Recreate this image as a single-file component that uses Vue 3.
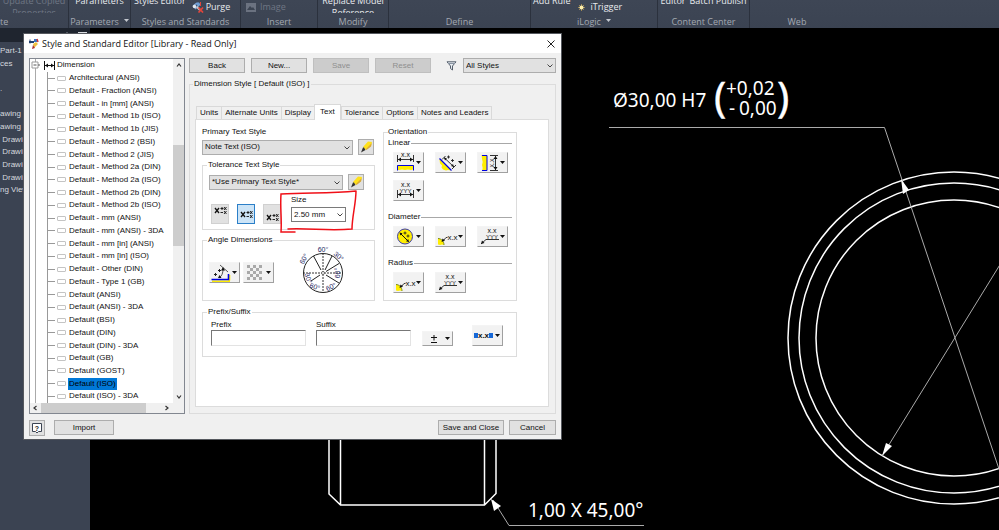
<script setup>
import { ref } from 'vue'

const treeItems = [
  'Architectural (ANSI)', 'Default - Fraction (ANSI)', 'Default - in [mm] (ANSI)',
  'Default - Method 1b (ISO)', 'Default - Method 1b (JIS)', 'Default - Method 2 (BSI)',
  'Default - Method 2 (JIS)', 'Default - Method 2a (DIN)', 'Default - Method 2a (ISO)',
  'Default - Method 2b (DIN)', 'Default - Method 2b (ISO)', 'Default - mm (ANSI)',
  'Default - mm (ANSI) - 3DA', 'Default - mm [in] (ANSI)', 'Default - mm [in] (ISO)',
  'Default - Other (DIN)', 'Default - Type 1 (GB)', 'Default (ANSI)', 'Default (ANSI) - 3DA',
  'Default (BSI)', 'Default (DIN)', 'Default (DIN) - 3DA', 'Default (GB)', 'Default (GOST)',
  'Default (ISO)', 'Default (ISO) - 3DA'
]
const selected = ref('Default (ISO)')

const tabs = ['Units', 'Alternate Units', 'Display', 'Text', 'Tolerance', 'Options', 'Notes and Leaders']
const activeTab = ref('Text')

const orientation = [
  { name: 'Linear', icons: ['horizontal', 'aligned', 'vertical', 'stacked'] },
  { name: 'Diameter', icons: ['circle', 'leader', 'shelf'] },
  { name: 'Radius', icons: ['leader', 'shelf'] }
]

const browserRows = ['Part-1', 'ces', '', '.', '', 'awing View', 'awing View', ' Drawing', ' Drawing', ' Drawing', ' Drawing', 'ng View']

const toleranceAlign = ref('middle')
const alignments = ['top', 'middle', 'bottom']
</script>

<template>
  <div class="app">
    <svg class="defs" aria-hidden="true">
      <defs>
        <symbol id="i-horizontal" viewBox="0 0 22 19">
          <path d="M3 12h17v5l-1-.6-2 .6-3-.5-3 .5-3-.5-3 .5H3z" fill="#ffee00" />
          <path d="M3.500 17.500v-5h16v5" fill="none" stroke="#0000e0" />
          <path d="M3.500 2v7M19.500 2v7M4 6.500h15" stroke="#333" fill="none" />
          <path d="M4 6.500l3-2v4zM19 6.500l-3-2v4z" fill="#111" />
          <text x="11.500" y="4" class="g">x.x</text>
        </symbol>
        <symbol id="i-aligned" viewBox="0 0 22 19">
          <path d="M3.500 6L15 17.500l-3-.5-2 .5-3-1-1.500-2 .5-2-2-2z" fill="#ffee00" />
          <path d="M3.500 5.500L15.500 17.500" stroke="#0000e0" stroke-width="1.300" />
          <path d="M6 6.500L9.500 3M16 16l4-4M8 4.500L18 14" stroke="#333" fill="none" />
          <path d="M8 4.500l3 1-2 2zM18 14l-3-1 2-2z" fill="#111" />
          <path d="M12.500 2.500v3M11 4h3M16.500 6v3M15 7.500h3" stroke="#222" stroke-width=".9" />
        </symbol>
        <symbol id="i-vertical" viewBox="0 0 22 19">
          <path d="M3.500 2H9v16H4l.7-3-.7-3 .7-3-.7-3z" fill="#ffee00" />
          <path d="M4 2.500h5v15H4" fill="none" stroke="#0000e0" />
          <path d="M12 2.500h8M12 17.500h8M17.500 3v14" stroke="#333" fill="none" />
          <path d="M17.500 3l-2 3h4zM17.500 17l-2-3h4z" fill="#111" />
          <text x="0" y="0" class="g" transform="translate(15.500 10) rotate(-90)">x.x</text>
        </symbol>
        <symbol id="i-stacked" viewBox="0 0 22 19">
          <path d="M3.500 9v8M19.500 9v8M4 13.500h15" stroke="#333" fill="none" />
          <path d="M4 13.500l3-2v4zM19 13.500l-3-2v4z" fill="#111" />
          <text x="11.500" y="6" class="g">x.x</text>
          <text x="11.500" y="12" class="g s">YYY</text>
        </symbol>
        <symbol id="i-circle" viewBox="0 0 22 19">
          <circle cx="11" cy="9.500" r="7.500" fill="#ffee00" stroke="#3a3aa8" />
          <path d="M6 6l8.500 8.500" stroke="#111" />
          <path d="M5.500 5.500l3 .8-2.200 2.200zM15 15l-3-.8 2.200-2.200z" fill="#111" />
          <path d="M11 4.500v3M9.500 6h3M14 7.500v3M12.500 9h3" stroke="#222" stroke-width=".9" />
        </symbol>
        <symbol id="i-leader" viewBox="0 0 22 19">
          <path d="M2 11.500c3 0 6 2.500 6 6.500l-2-.5-2 .5-2-.5z" fill="#ffee00" />
          <path d="M2 11.500c3 0 6 2.500 6 6.500" fill="none" stroke="#7a8a20" />
          <path d="M7 14l3-3.500h1.500" stroke="#333" fill="none" />
          <path d="M5.500 15l1-3.500 2.500 2z" fill="#111" />
          <text x="16.500" y="12.500" class="g l">x.x</text>
        </symbol>
        <symbol id="i-shelf" viewBox="0 0 22 19">
          <path d="M3 17l5-4.500h13" stroke="#333" fill="none" />
          <path d="M3 17l1-3.500 2.500 2.500z" fill="#111" />
          <text x="14" y="5.500" class="g">x.x</text>
          <text x="14" y="11.500" class="g s">YYY</text>
        </symbol>
        <symbol id="i-angle" viewBox="0 0 22 19">
          <path d="M2 17.500h16.500V12h1.800v5.500H20V19H2z" fill="#ffee00" />
          <path d="M1.500 16.500h17V11" stroke="#0000e0" stroke-width="1.600" fill="none" />
          <path d="M9 15c3-2 4-5 4-9M10 2l8 7" stroke="#555" fill="none" />
          <path d="M13 4l2 3.500h-4zM8 15l3.500 0-2-3z" fill="#111" />
          <path d="M4 11.500h3M5.500 10v3M8 7.500h3M9.500 6v3" stroke="#222" />
        </symbol>
        <symbol id="i-checker" viewBox="0 0 22 19">
          <path fill="#a9a9a9" d="M3 2h3v3H3zM9 2h3v3H9zM15 2h3v3h-3zM6 5h3v3H6zM12 5h3v3h-3zM3 8h3v3H3zM9 8h3v3H9zM15 8h3v3h-3zM6 11h3v3H6zM12 11h3v3h-3zM3 14h3v3H3zM9 14h3v3H9zM15 14h3v3h-3z" />
        </symbol>
        <symbol id="i-spread" viewBox="0 0 22 19">
          <path d="M1 7h4v5H1zM16 7h4v5h-4z" fill="#1668d8" />
          <text x="10.500" y="12" class="g b">x.x</text>
        </symbol>
        <symbol id="i-plusminus" viewBox="0 0 22 13">
          <path d="M8 5.500h6M11 3v5.500M8 10.500h6" stroke="#111" fill="none" />
        </symbol>
        <symbol id="i-pencil" viewBox="0 0 14 14">
          <path d="M4 7l5-5.500 4 .5-1 4L7 10z" fill="#ffe11a" />
          <path d="M12.800 3l-.8 3.500L7.500 10l-.5-1z" fill="#d9a93c" />
          <path d="M4 7.500l1 0 1.500 2.500L2 12.500z" fill="#333" />
        </symbol>
        <symbol id="i-chevron" viewBox="0 0 8 6">
          <path d="M1.500 1.500L4 4l2.500-2.500" stroke="#444" fill="none" />
        </symbol>
        <symbol id="i-caret" viewBox="0 0 5 3">
          <path d="M0 0h5L2.500 3z" fill="currentColor" />
        </symbol>
      </defs>
    </svg>

    <header class="ribbon">
      <section class="group g1">
        <div class="tools"><button class="big dim">Update Copied<br>Properties</button></div>
        <h2>te</h2>
      </section>
      <section class="group g2">
        <div class="tools"><button class="big">Parameters</button></div>
        <h2>Parameters <svg width="5" height="3" class="down"><use href="#i-caret" /></svg></h2>
      </section>
      <section class="group g3">
        <div class="tools">
          <button class="big">Styles Editor</button>
          <button class="small">
            <svg width="12" height="12" viewBox="0 0 12 12">
              <path d="M1 5l4-3M3 8l5-5" stroke="#7fa8d8" stroke-width="1.500" />
              <circle cx="2.500" cy="5.500" r="1.800" fill="#dfe6ee" /><circle cx="6" cy="3" r="1.800" fill="#6f9fd8" />
              <path d="M5 6l3 3" stroke="#ccc" stroke-width="2" />
              <path d="M6.500 6.500l4.500 5M11 6.500l-4.500 5" stroke="#e2453b" stroke-width="1.700" />
              <path d="M8.500 1v4" stroke="#e2453b" />
            </svg>
            Purge
          </button>
        </div>
        <h2>Styles and Standards</h2>
      </section>
      <section class="group g4">
        <div class="tools">
          <button class="small dim">
            <svg width="10" height="9" viewBox="0 0 10 9">
              <path d="M0 0h10v9H0z" fill="#6b7280" /><path d="M1 7l3-4 2 2 1-1 2 3z" fill="#3c4452" />
            </svg>
            Image
          </button>
        </div>
        <h2>Insert</h2>
      </section>
      <section class="group g5">
        <div class="tools"><button class="big">Replace Model<br>Reference</button></div>
        <h2>Modify</h2>
      </section>
      <section class="group g6">
        <div class="tools"></div>
        <h2>Define</h2>
      </section>
      <section class="group g7">
        <div class="tools">
          <button class="big">Add Rule</button>
          <button class="small">
            <svg width="9" height="9" viewBox="0 0 9 9">
              <path d="M4.500 1v7M1 4.500h7M2 2l5 5M7 2L2 7" stroke="#b59a55" stroke-width=".8" />
              <circle cx="4.500" cy="4.500" r="2" fill="#ffeeaa" />
            </svg>
            iTrigger
          </button>
        </div>
        <h2>iLogic <svg width="5" height="3" class="down"><use href="#i-caret" /></svg></h2>
      </section>
      <section class="group g8">
        <div class="tools"><button class="big">Editor</button><button class="big">Batch Publish</button></div>
        <h2>Content Center</h2>
      </section>
      <section class="group g9">
        <div class="tools"></div>
        <h2>Web</h2>
      </section>
    </header>

    <main class="workspace">
      <aside class="browser">
        <div class="browser-bar">
          <svg width="9" height="9" viewBox="0 0 9 9"><circle cx="4" cy="4" r="3" fill="none" stroke="#b8bcc4" /></svg>
          <svg width="9" height="9" viewBox="0 0 9 9"><path d="M0 .5h9M0 4.500h9" stroke="#d8dbe0" stroke-width="1" /></svg>
        </div>
        <ul><li v-for="(row, i) in browserRows" :key="i">{{ row }}</li></ul>
      </aside>

      <svg class="drawing" role="img" aria-label="Part drawing">
        <g fill="none" stroke="#fff" stroke-width="1.500">
          <circle cx="864" cy="310" r="166" />
          <circle cx="864" cy="310" r="155" />
          <circle cx="864" cy="310" r="138" />
          <path d="M239 400V466L250.500 477H394.500L406 465.500V400M250.500 400V477M394.500 400V477" />
        </g>
        <g fill="none" stroke="#aaa">
          <path d="M519 99.500H794.500L909 441" />
          <path d="M792 428L911 235" />
          <path d="M403 472L419 497.500H554" />
        </g>
        <g fill="#fff">
          <path d="M811 151L813 166L819 162z" />
          <path d="M792 428L796 415L802 418z" />
          <path d="M401 471L404 483L411 478z" />
        </g>
        <g class="note">
          <text x="523" y="79">Ø30,00 H7</text>
          <text x="636" y="67">+0,02</text>
          <text x="639" y="87">-</text>
          <text x="649" y="87">0,00</text>
          <text x="624" y="84" class="paren">(</text>
          <text x="687" y="84" class="paren">)</text>
          <text x="438" y="489">1,00 X 45,00°</text>
        </g>
      </svg>
    </main>

    <div class="dialog" role="dialog" aria-labelledby="dlg-title">
      <div class="titlebar">
        <svg width="11" height="11" viewBox="0 0 11 11">
          <path d="M1 3h5v2H1z" fill="#22406e" /><path d="M2 1.500v4" stroke="#22406e" />
          <path d="M6 1h3v3H6z" fill="#3c78c8" /><path d="M9 1l1 3" stroke="#c33" stroke-width="1.500" />
          <path d="M5 6l3-2 2 2-4 4z" fill="#f0c040" /><path d="M5 7l2 3-3 1z" fill="#b03030" />
        </svg>
        <h1 id="dlg-title">Style and Standard Editor [Library - Read Only]</h1>
        <button class="close" aria-label="Close">
          <svg width="8" height="8" viewBox="0 0 8 8"><path d="M.5.5l7 7M7.500.5l-7 7" stroke="#222" /></svg>
        </button>
      </div>

      <div class="body">
        <div class="tree">
          <div class="tree-main">
            <ul role="tree">
              <li class="root">
                <svg width="9" height="9" viewBox="0 0 9 9" class="toggle"><path d="M1 1h6v6H1z" fill="#fff" stroke="#999" /><path d="M2.500 4h3M7 4h2" stroke="#555" /></svg>
                <svg width="11" height="9" viewBox="0 0 11 9"><path d="M.5 0v9M10.500 0v9M1 4.500h9" stroke="#111" /><path d="M1 4.500l3-2v4zM10 4.500l-3-2v4z" fill="#111" /></svg>
                <span>Dimension</span>
              </li>
              <li v-for="item in treeItems" :key="item" class="leaf" role="treeitem" :aria-selected="item === selected" @click="selected = item">
                <i class="branch"></i><i class="tag"></i>
                <span :class="{ on: item === selected }">{{ item }}</span>
              </li>
            </ul>
            <div class="vbar">
              <svg width="8" height="6" viewBox="0 0 8 6"><path d="M2 4.500L4 2l2 2.500" stroke="#333" stroke-width="1.200" fill="none" /></svg>
              <div class="vtrack"><div class="vthumb"></div></div>
              <svg width="8" height="6" viewBox="0 0 8 6"><path d="M2 1.500L4 4l2-2.500" stroke="#333" stroke-width="1.200" fill="none" /></svg>
            </div>
          </div>
          <div class="hbar">
            <svg width="6" height="8" viewBox="0 0 6 8"><path d="M4.500 2L2 4l2.500 2" stroke="#333" stroke-width="1.200" fill="none" /></svg>
            <div class="htrack"><div class="hthumb"></div></div>
            <svg width="6" height="8" viewBox="0 0 6 8"><path d="M1.500 2L4 4 1.500 6" stroke="#333" stroke-width="1.200" fill="none" /></svg>
          </div>
        </div>

        <div class="editor">
          <div class="toolbar">
            <button class="btn">Back</button>
            <button class="btn">New...</button>
            <button class="btn" disabled>Save</button>
            <button class="btn" disabled>Reset</button>
            <svg class="filter" width="11" height="10" viewBox="0 0 11 10"><path d="M1 .8h9L6.500 5v4L4.500 7.500V5z" fill="#e8edf2" stroke="#555f6c" /><path d="M2 2.500h7" stroke="#8a95a3" /></svg>
            <div class="pick all">
              <select aria-label="Style filter"><option>All Styles</option></select>
              <svg width="8" height="6"><use href="#i-chevron" /></svg>
            </div>
          </div>

          <fieldset class="style-group">
            <legend>Dimension Style [ Default (ISO) ]</legend>
            <div class="tabs" role="tablist">
              <button v-for="t in tabs" :key="t" role="tab" :aria-selected="t === activeTab" :class="{ active: t === activeTab }" @click="activeTab = t">{{ t }}</button>
            </div>
            <div class="pane">
              <div class="columns">
                <div class="left">
                  <label for="primary">Primary Text Style</label>
                  <div class="line">
                    <div class="pick primary">
                      <select id="primary"><option>Note Text (ISO)</option></select>
                      <svg width="8" height="6"><use href="#i-chevron" /></svg>
                    </div>
                    <button class="edit" aria-label="Edit text style"><svg width="14" height="14"><use href="#i-pencil" /></svg></button>
                  </div>

                  <fieldset class="tolerance">
                    <legend>Tolerance Text Style</legend>
                    <div class="line">
                      <div class="pick use">
                        <select aria-label="Tolerance text style"><option>*Use Primary Text Style*</option></select>
                        <svg width="8" height="6"><use href="#i-chevron" /></svg>
                      </div>
                      <button class="edit" aria-label="Edit tolerance style"><svg width="14" height="14"><use href="#i-pencil" /></svg></button>
                    </div>
                    <div class="size-row">
                      <div class="toggles">
                        <button v-for="a in alignments" :key="a" :class="[a, { active: a === toleranceAlign }]" :aria-label="'Align ' + a" @click="toleranceAlign = a">
                          <svg width="13" height="9" viewBox="0 0 13 9">
                            <path d="M1 2l4 5M5 2L1 7" stroke="#111" stroke-width="1.300" />
                            <path d="M6.500 2.500h3M8 1v3M6.500 6.500h2.500M10 1l2.500 3M12.500 1L10 4M10 5l2.500 3M12.500 5L10 8" stroke="#111" stroke-width=".9" />
                          </svg>
                        </button>
                      </div>
                      <div class="size">
                        <label for="size">Size</label>
                        <div class="pick white">
                          <select id="size"><option>2.50 mm</option></select>
                          <svg width="8" height="6"><use href="#i-chevron" /></svg>
                        </div>
                      </div>
                    </div>
                    <svg class="scribble" width="80" height="46" viewBox="0 0 80 46">
                      <path d="M77 2C50 5 25 3 2 5C1 20 3 30 2 43L16 43M77 2C77 14 73 28 73 40C50 42 30 39 9 40" />
                    </svg>
                  </fieldset>

                  <fieldset class="angle">
                    <legend>Angle Dimensions</legend>
                    <div class="angle-row">
                      <button class="drop" aria-label="Angle style"><svg width="22" height="19"><use href="#i-angle" /></svg><svg width="5" height="3"><use href="#i-caret" /></svg></button>
                      <button class="drop" aria-label="Quadrant pattern"><svg width="22" height="19"><use href="#i-checker" /></svg><svg width="5" height="3"><use href="#i-caret" /></svg></button>
                      <svg class="dial" width="48" height="50" viewBox="0 0 48 50">
                        <circle cx="24" cy="26" r="19.500" fill="none" stroke="#222" />
                        <path d="M24 6v40M4 26h40" stroke="#333" stroke-dasharray="2 1" />
                        <path d="M22 23L14.500 9M26 23l7-14M27 24.500l13-8M27 28l13 8M21 28l-9 6" stroke="#222" />
                        <circle cx="24" cy="26" r="1.500" fill="#fff" stroke="#333" stroke-width=".6" />
                        <g>
                          <text x="24" y="5">60°</text>
                          <text transform="translate(38 11) rotate(42)">30°</text>
                          <text transform="translate(7 13) rotate(-62)">60°</text>
                          <text transform="translate(41 26) rotate(-90)">60°</text>
                          <text transform="translate(7 32) rotate(70)">30°</text>
                          <text transform="translate(15 42) rotate(20)">60°</text>
                          <text transform="translate(33 42) rotate(-25)">60°</text>
                        </g>
                      </svg>
                    </div>
                  </fieldset>
                </div>

                <fieldset class="orientation">
                  <legend>Orientation</legend>
                  <section v-for="group in orientation" :key="group.name">
                    <h3>{{ group.name }}</h3>
                    <div class="drops">
                      <button v-for="icon in group.icons" :key="icon" class="drop" :aria-label="group.name + ' ' + icon">
                        <svg width="22" height="19"><use :href="'#i-' + icon" /></svg><svg width="5" height="3"><use href="#i-caret" /></svg>
                      </button>
                    </div>
                  </section>
                </fieldset>
              </div>

              <fieldset class="affix">
                <legend>Prefix/Suffix</legend>
                <div class="affix-row">
                  <div class="field"><label for="prefix">Prefix</label><input id="prefix" type="text"></div>
                  <div class="field"><label for="suffix">Suffix</label><input id="suffix" type="text"></div>
                  <button class="drop flat" aria-label="Insert symbol"><svg width="22" height="13"><use href="#i-plusminus" /></svg><svg width="5" height="3"><use href="#i-caret" /></svg></button>
                  <button class="drop spread" aria-label="Affix placement"><svg width="22" height="19"><use href="#i-spread" /></svg><svg width="5" height="3"><use href="#i-caret" /></svg></button>
                </div>
              </fieldset>
            </div>
          </fieldset>
        </div>
      </div>

      <footer>
        <button class="help" aria-label="Help">
          <svg width="12" height="12" viewBox="0 0 12 12"><path d="M1.500 1.500h9v8h-3L6 11 4.500 9.500h-3z" fill="#fff" stroke="#3c4452" /><text x="6" y="8.500">?</text></svg>
        </button>
        <button class="btn import">Import</button>
        <button class="btn save">Save and Close</button>
        <button class="btn cancel">Cancel</button>
      </footer>
    </div>
  </div>
</template>

<style>
body { margin: 0; background: #000; }
</style>

<style scoped>
* { box-sizing: border-box; }
.app {
  position: relative;
  min-height: 100vh;
  display: flex;
  flex-direction: column;
  overflow: hidden;
  background: #000;
  font: 8px/10px "Liberation Sans", Arial, sans-serif;
  color: #111;
}
.defs { position: absolute; width: 0; height: 0; }
button, select, input { font: inherit; color: inherit; margin: 0; padding: 0; border: 0; border-radius: 0; background: none; }
h1, h2, h3, ul { margin: 0; padding: 0; font: inherit; list-style: none; }
svg { display: block; flex: none; }

/* ribbon */
.ribbon {
  display: flex;
  height: 28px;
  background: linear-gradient(#3e4655, #3b4352);
  font: 9px/12px "Open Sans", "Noto Sans", sans-serif;
  color: #e8eaee;
}
.group { flex: none; border-right: 1px solid #2b313d; display: flex; flex-direction: column; }
.group h2 { color: #a3a8b1; height: 12px; display: flex; justify-content: center; align-items: center; gap: 5px; white-space: nowrap; }
.tools { height: 14px; margin-bottom: 3px; overflow: hidden; display: flex; align-items: flex-start; justify-content: center; gap: 4px; white-space: nowrap; }
.big { margin-top: -5px; flex: none; }
.small { margin-top: 1px; flex: none; display: flex; align-items: center; gap: 2px; }
.dim { color: #6f7684; }
.down { color: #c5c9d0; margin-bottom: 4px; }
.g1 { width: 69px; }
.g1 h2 { justify-content: flex-start; }
.g2 { width: 62px; }
.g3 { width: 110px; }
.g3 .tools { justify-content: flex-start; padding-left: 3px; gap: 6px; }
.g4 { width: 77px; }
.g4 .tools { justify-content: flex-start; padding-left: 5px; }
.g4 .small { gap: 4px; }
.g5 { width: 71px; }
.g6 { width: 142px; }
.g7 { width: 127px; }
.g7 .tools { justify-content: flex-start; padding-left: 2px; gap: 7px; }
.g7 .small { gap: 4px; }
.g8 { width: 92px; }
.g9 { width: 94px; border-right: 0; }

/* workspace */
.workspace { flex: 1; display: flex; min-height: 502px; }
.browser { width: 90px; background: #3b4352; color: #d5d8de; }
.browser-bar { height: 14px; background: #1f252f; display: flex; justify-content: flex-end; gap: 6px; padding: 4px 3px 0 0; }
.browser ul { margin-top: 3px; display: grid; grid-auto-rows: 1fr; height: 152px; }
.browser li { min-height: 0; line-height: 12px; white-space: pre; }
.drawing { flex: 1; width: 0; height: auto; }
.note { fill: #fff; font: 19px "Noto Sans", "Open Sans", sans-serif; }
.paren { font-size: 41px; stroke: #fff; stroke-width: 0.4; }

/* dialog */
.dialog {
  position: absolute;
  left: 24px;
  top: 34px;
  width: 537px;
  background: #f0f0f0;
  box-shadow: 0 0 0 1px #55585e;
}
.titlebar { height: 19px; background: #fff; display: flex; align-items: center; gap: 3px; padding: 0 5px 0 4px; }
.titlebar h1 { flex: 1; font: 9px/18px "Open Sans", "Noto Sans", sans-serif; color: #111; }
.close { padding: 1px; }
.body { display: grid; grid-template-columns: 156px 1fr; gap: 4px; padding: 5px 5px 0; }

.tree { background: #fff; border: 1px solid #828790; display: flex; flex-direction: column; }
.tree-main { flex: 1; display: flex; min-height: 0; }
.tree ul { flex: 1; display: flex; flex-direction: column; margin-left: 5px; border-left: 1px solid #aaa; }
.tree li { flex: 1; display: flex; align-items: center; white-space: nowrap; cursor: default; }
.root svg + svg { margin: 0 2px 0 4px; }
.toggle { margin-left: -5px; }
.leaf { margin-left: 11px; border-left: 1px solid #999; }
.branch { width: 7px; height: 1px; background: #999; }
.tag { width: 9px; height: 5px; margin: 0 2px; border: 1px solid #c4c4c4; border-radius: 1px; }
.leaf span { padding: 0 1px; line-height: 12px; }
.leaf .on { background: #0078d7; color: #000; }
.vbar { width: 11px; background: #f0f0f0; display: flex; flex-direction: column; align-items: center; padding: 3px 0; gap: 2px; }
.vtrack { flex: 1; width: 100%; display: grid; grid-template-rows: 75fr 101fr 146fr; }
.vthumb { grid-row: 2; background: #cdcdcd; }
.hbar { height: 10px; background: #f0f0f0; display: flex; align-items: center; padding: 0 14px 0 2px; gap: 3px; }
.htrack { flex: 1; height: 100%; display: grid; grid-template-columns: 106fr 15fr; }
.hthumb { background: #cdcdcd; }

.editor { display: flex; flex-direction: column; min-width: 0; }
.toolbar { display: flex; align-items: center; gap: 6px; margin-bottom: 6px; }
.btn { height: 15px; background: #e1e1e1; border: 1px solid #adadad; white-space: nowrap; }
.toolbar .btn { width: 56px; }
.btn:disabled { background: #ccc; border-color: #bfbfbf; color: #8f8f8f; }
.filter { margin-left: 9px; }

.pick { position: relative; display: flex; }
.pick select { appearance: none; flex: 1; min-width: 0; height: 15px; padding: 0 12px 0 2px; background: #e1e1e1; border: 1px solid #adadad; }
.pick svg { position: absolute; right: 2px; top: 5px; pointer-events: none; }
.pick.white select { background: #fff; border-color: #7a7a7a; }
.all, .primary, .use { flex: 1; }

fieldset { position: relative; margin: 0; padding: 0; border: 1px solid #dcdcdc; min-width: 0; }
legend { margin-left: -2px; padding: 0 1px; }
.style-group { flex: 1; padding: 15px 6px 6px 5px; display: block; }
.tabs { display: flex; align-items: flex-end; height: 15px; padding-left: 1px; }
.tabs button { height: 13px; padding: 0 3px; border: 1px solid #d9d9d9; border-bottom: 0; margin-right: -1px; white-space: nowrap; }
.tabs .active { position: relative; height: 16px; padding: 0 5px 2px; margin-bottom: -1px; margin-right: 0; background: #fff; }
.pane { background: #fff; border: 1px solid #dcdcdc; padding: 7px 31px 49px 6px; }
.columns { display: grid; grid-template-columns: 1fr 134px; gap: 8px; }
.left { display: flex; flex-direction: column; gap: 2px; }
.line { display: flex; align-items: center; gap: 5px; padding-right: 1px; }
.edit { width: 16px; height: 16px; border: 1px solid #adadad; background: #e1e1e1; }
.left fieldset { margin-top: 3px; }
.tolerance { padding: 4px 9px 5px 6px; }
.size-row { display: flex; gap: 10px; padding: 5px 0 0 2px; height: 34px; }
.toggles { display: flex; align-items: flex-end; gap: 8px; }
.toggles button { width: 18px; height: 20px; background: #e1e1e1; border: 1px solid #d0d0d0; display: flex; justify-content: center; align-items: center; }
.toggles .top { align-items: flex-start; padding-top: 1px; }
.toggles .bottom { align-items: flex-end; padding-bottom: 1px; }
.toggles .active { background: #cce4f7; border-color: #2b7fc8; }
.size { width: 55px; display: flex; flex-direction: column; gap: 2px; }
.scribble { position: absolute; left: 76px; top: 19px; pointer-events: none; fill: none; stroke: #f01018; stroke-width: 1.5; stroke-linecap: round; }

.angle { padding: 2px 6px 3px; }
.angle-row { display: flex; align-items: center; gap: 3px; }
.dial { margin-left: 22px; }
.dial text { font-size: 7px; fill: #23235e; text-anchor: middle; }
.drop { width: 31px; height: 21px; display: flex; align-items: center; background: #f2f2f2; border: 1px solid; border-color: #f4f4f4 #a0a0a0 #a0a0a0 #f4f4f4; color: #111; }
.flat { height: 15px; }
.g { font: 7px "Liberation Sans", Arial, sans-serif; fill: #111; text-anchor: middle; }
.g.s { font-size: 6px; }
.g.l { font-size: 8px; }
.g.b { font-size: 8px; font-weight: 700; }

.orientation { padding: 1px 4px 0; display: block; }
.orientation legend { margin-left: 0; padding-left: 0; }
.orientation section { margin-bottom: 11px; }
.orientation section:last-child { margin-bottom: 0; }
h3 { display: flex; align-items: center; gap: 1px; margin-bottom: 4px; }
h3::after { content: ""; flex: 1; height: 1px; background: #a8a8a8; }
.drops { display: grid; grid-template-columns: repeat(3, 31px); gap: 7px 11px; padding-left: 5px; }

.affix { margin-top: 6px; padding: 3px 8px 10px; }
.affix legend { margin-left: -4px; }
.affix-row { display: flex; align-items: flex-end; gap: 10px; }
.field { width: 95px; display: flex; flex-direction: column; }
.field input { height: 16px; width: 100%; background: #fff; border: 1px solid; border-color: #777 #e3e3e3 #e3e3e3 #777; }
.flat { margin-left: 1px; }
.spread { margin-left: 9px; }

footer { display: flex; align-items: flex-start; gap: 5px; padding: 6px 5px 3px; }
.help { width: 16px; height: 16px; background: #e1e1e1; border: 1px solid #adadad; display: flex; align-items: center; justify-content: center; }
.help text { font: bold 7px "Liberation Sans", Arial, sans-serif; text-anchor: middle; fill: #222; }
.import { width: 60px; margin-left: 4px; }
.save { width: 66px; margin-left: auto; }
.cancel { width: 47px; }
</style>
